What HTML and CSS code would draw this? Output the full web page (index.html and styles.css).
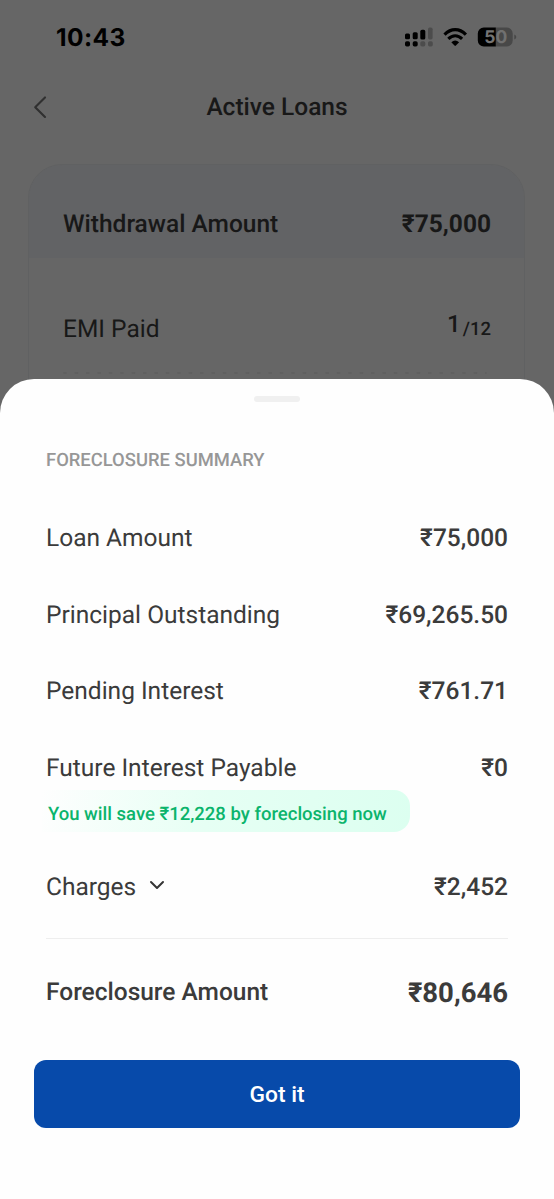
FILE: index.html
```html
<!DOCTYPE html>
<html lang="en">
<head>
<meta charset="utf-8">
<meta name="viewport" content="width=device-width, initial-scale=1">
<title>Active Loans</title>
<link rel="stylesheet" href="styles.css">
</head>
<body>
<div class="screen">
  <div class="backdrop">
    <div class="status">
      <span class="clock">10:43</span>
      <svg class="indicators" width="114" height="24" viewBox="0 0 114 24">
        <g fill="#000">
          <rect x="2" y="8.6" width="5" height="5.6" rx="1.5"/>
          <rect x="9.700" y="7.2" width="5" height="7" rx="1.5"/>
          <rect x="17.300" y="4.8" width="5" height="9.8" rx="1.7"/>
          <rect x="2" y="16.2" width="5" height="5.2" rx="1.7"/>
          <rect x="9.700" y="16.2" width="5" height="5.2" rx="1.7"/>
        </g>
        <g fill="#4c4c4c">
          <rect x="25" y="2.6" width="4.6" height="11.8" rx="1.7"/>
          <rect x="17.300" y="16.2" width="5" height="5.2" rx="1.7"/>
          <rect x="25" y="16.2" width="4.8" height="5.2" rx="1.7"/>
        </g>
        <g fill="none" stroke="#000" stroke-width="3.1">
          <path d="M41.500 9.6C48 2.9 56.400 2.900 62.900 9.600"/>
          <path d="M45.300 13.900C49.500 9.800 54.900 9.800 59.100 13.900"/>
        </g>
        <path d="M48.300 17.200Q52.200 13.700 56.100 17.200L52.900 20.600Q52.200 21.200 51.500 20.600Z" fill="#000"/>
        <path d="M92.800 2.600h10.900a6 6 0 0 1 6 6v7a6 6 0 0 1-6 6h-10.900z" fill="#484848"/>
        <path d="M92.800 2.600h-12a6 6 0 0 0-6 6v7a6 6 0 0 0 6 6h12z" fill="#000"/>
        <path d="M111.300 9.600q2 .8 2 2.500t-2 2.500z" fill="#484848"/>
        <text class="battery" x="81.300" y="18.300">5</text>
        <text class="battery battery-dim" x="92.600" y="18.300">0</text>
      </svg>
    </div>
    <div class="nav">
      <svg class="back" width="14" height="24" viewBox="0 0 14 24"><path d="M12 2.400L2.200 12.200L12 22" fill="none" stroke="#303030" stroke-width="2.100" stroke-linecap="round" stroke-linejoin="round"/></svg>
      <h1 class="title">Active Loans</h1>
    </div>
    <div class="card">
      <div class="card-head">
        <span class="wd-label">Withdrawal Amount</span>
        <span class="wd-value">₹75,000</span>
      </div>
      <div class="card-row">
        <span class="emi-label">EMI Paid</span>
        <span class="emi-value"><span class="emi-paid">1</span><span class="emi-total">/12</span></span>
      </div>
      <svg class="dots" width="430" height="4" viewBox="0 0 430 4"><line x1="2" y1="2" x2="424" y2="2" stroke="#606060" stroke-width="1.800" stroke-linecap="round" stroke-dasharray="2 9.400"/></svg>
    </div>
  </div>
  <div class="sheet">
    <div class="handle"></div>
    <h2 class="summary">FORECLOSURE SUMMARY</h2>
    <div class="rows">
      <div class="row"><span class="label">Loan Amount</span><span class="value">₹75,000</span></div>
      <div class="row"><span class="label">Principal Outstanding</span><span class="value">₹69,265.50</span></div>
      <div class="row"><span class="label">Pending Interest</span><span class="value">₹761.71</span></div>
      <div class="row"><span class="label">Future Interest Payable</span><span class="value">₹0</span></div>
    </div>
    <div class="saving"><span class="saving-text">You will save ₹12,228 by foreclosing now</span></div>
    <div class="row charges">
      <span class="label">Charges</span>
      <svg class="chevron" width="16" height="10" viewBox="0 0 16 10"><path d="M2 2L8 8L14 2" fill="none" stroke="#353535" stroke-width="2" stroke-linecap="round" stroke-linejoin="round"/></svg>
      <span class="value">₹2,452</span>
    </div>
    <div class="total">
      <span class="total-label">Foreclosure Amount</span>
      <span class="total-value">₹80,646</span>
    </div>
    <button class="confirm">Got it</button>
  </div>
</div>
</body>
</html>
```
FILE: styles.css
```css
* { box-sizing: border-box; }
body { margin: 0; font-family: Roboto, "Noto Sans", sans-serif; color: #3b3b3b; text-rendering: geometricPrecision; }
h1, h2 { margin: 0; }
span, h1, h2 { white-space: nowrap; }
svg { display: block; flex: none; }

.screen { width: 554px; height: 1199px; overflow: hidden; background: #fefefe; }
.backdrop { height: 430px; background: #666; color: #181818; overflow: hidden; }

.status { display: flex; justify-content: space-between; align-items: center; height: 74px; padding: 0 37px 0 56px; }
.clock { font: 700 24.5px/30px Inter, sans-serif; color: #000; letter-spacing: 0.4px; }
.battery { font: 700 17.5px Inter, sans-serif; fill: #747474; }
.battery-dim { fill: #707070; }

.nav { display: grid; grid-template-columns: 60px 1fr 60px; align-items: center; height: 66px; }
.back { margin-left: 33px; }
.title { text-align: center; font-size: 24.5px; line-height: 30px; font-weight: 500; }

.card { width: 497px; height: 300px; margin: 24px 0 0 28px; border: 1px solid #606162; border-radius: 34px; overflow: hidden; }
.card-head { display: flex; justify-content: space-between; align-items: center; height: 93px; padding: 24px 33px 0 34px; background: #626365; font-size: 24.5px; line-height: 30px; }
.wd-label { font-weight: 500; }
.wd-value { font-weight: 700; }
.card-row { display: flex; justify-content: space-between; height: 113px; padding: 56px 33px 0 34px; }
.emi-label { font-size: 24.5px; line-height: 30px; }
.emi-value { line-height: 30px; display: flex; gap: 2px; font-weight: 500; }
.emi-paid { font-size: 24px; margin-top: -5px; }
.emi-total { font-size: 18.5px; }
.dots { margin-left: 33px; }

.sheet { position: relative; height: 820px; margin-top: -51px; padding: 17px 46px 0; background: #fefefe; border-radius: 34px 34px 0 0; }
.handle { width: 46px; height: 6px; margin: 0 auto; border-radius: 3px; background: #f0f0f0; }
.summary { margin-top: 47px; font-size: 18.4px; line-height: 24px; font-weight: 500; color: #979797; }
.rows { display: grid; gap: 46.7px; margin-top: 50px; }
.row { display: flex; justify-content: space-between; height: 30px; font-size: 24.5px; line-height: 30px; }
.value { font-weight: 500; }
.saving { width: 368px; height: 42px; margin: 7px 0 0 -4px; padding-left: 6px; border-radius: 0 16px 16px 0; background: linear-gradient(100deg, #fefefe 0%, #e6fff4 45%, #dcfff0 100%); color: #0bb46c; font-size: 18.5px; line-height: 48px; font-weight: 500; }
.charges { margin-top: 40px; justify-content: flex-start; }
.chevron { margin: 8px 0 0 13px; }
.charges .value { margin-left: auto; }
.total { display: flex; justify-content: space-between; align-items: center; height: 106px; margin-top: 36px; border-top: 1px solid #eee; line-height: 34px; }
.total-label { font-size: 24.5px; font-weight: 500; }
.total-value { font-size: 27.5px; font-weight: 700; padding-top: 2px; }
.confirm { display: block; width: 486px; height: 68px; margin: 16px 0 0 -12px; padding: 0; border: 0; border-radius: 12px; background: #074aaa; color: #fff; font: 500 22.8px/69px Roboto, sans-serif; }
```
